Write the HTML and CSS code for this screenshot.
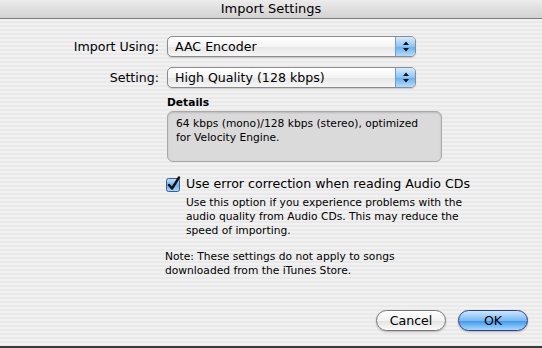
FILE: index.html
```html
<html lang="en">
	<head>
		<meta charset="UTF-8" />
		<title>Import Settings</title>
		<link rel="stylesheet" href="styles.css">
	</head>
	<body>
		<div class="window">
			<div class="titlebar">Import Settings</div>

			<div class="content">
				<div class="form">
					<label class="form-label">Import Using:</label>
					<div class="popup">
						<span class="popup-text">AAC Encoder</span>
						<span class="popup-arrows">
							<svg width="8" height="11" viewBox="0 0 8 11"><path d="M4 0.5 L7 4 L1 4 Z M1 7 L7 7 L4 10.5 Z" fill="#111"/></svg>
						</span>
					</div>

					<label class="form-label">Setting:</label>
					<div class="popup">
						<span class="popup-text">High Quality (128 kbps)</span>
						<span class="popup-arrows">
							<svg width="8" height="11" viewBox="0 0 8 11"><path d="M4 0.5 L7 4 L1 4 Z M1 7 L7 7 L4 10.5 Z" fill="#111"/></svg>
						</span>
					</div>
				</div>

				<div class="details">
					<div class="details-title">Details</div>
					<div class="details-box">64 kbps (mono)/128 kbps (stereo), optimized for Velocity Engine.</div>
				</div>

				<div class="option">
					<div class="check-row">
						<svg class="checkbox" width="15" height="16" viewBox="0 0 15 16">
							<defs>
								<linearGradient id="cb" x1="0" y1="0" x2="0" y2="1">
									<stop offset="0" stop-color="#c9e3fb"/>
									<stop offset="0.5" stop-color="#6fb0ee"/>
									<stop offset="1" stop-color="#a9d4fb"/>
								</linearGradient>
							</defs>
							<rect x="0.5" y="2.5" width="13" height="13" rx="2" fill="url(#cb)" stroke="#3d5f8c"/>
							<path d="M3 9 L6 12.5 L13 1.5" fill="none" stroke="#111" stroke-width="2.4" stroke-linecap="round" stroke-linejoin="round"/>
						</svg>
						<span class="check-label">Use error correction when reading Audio CDs</span>
					</div>
					<p class="option-help">Use this option if you experience problems with the audio quality from Audio CDs. This may reduce the speed of importing.</p>
				</div>

				<p class="note">Note: These settings do not apply to songs downloaded from the iTunes Store.</p>

				<div class="buttons">
					<div class="button">Cancel</div>
					<div class="button default">OK</div>
				</div>
			</div>
		</div>
	</body>
</html>
```

FILE: styles.css
```css
* {
	margin: 0;
	padding: 0;
	box-sizing: border-box;
}

body {
	width: 542px;
	height: 348px;
	overflow: hidden;
	font-family: "DejaVu Sans", sans-serif;
	font-size: 12.6px;
	color: #000;
}

.window {
	display: flex;
	flex-direction: column;
	height: 348px;
	border-bottom: 2px solid #3a3a3a;
}

.titlebar {
	height: 19px;
	line-height: 18px;
	text-align: center;
	font-size: 13px;
	background: linear-gradient(#ececec, #d2d2d2);
	border-bottom: 1px solid #7d7d7d;
}

.content {
	flex: 1;
	display: flex;
	flex-direction: column;
	padding: 17px 14px 0 0;
	background: repeating-linear-gradient(#f1f1f1 0 2px, #e9e9e9 2px 4px);
}

/* label / popup rows */
.form {
	display: grid;
	grid-template-columns: 159px 249px;
	column-gap: 8px;
	row-gap: 10px;
	align-items: center;
}

.form-label {
	text-align: right;
}

.popup {
	display: flex;
	height: 21px;
	border: 1px solid #8c8c8c;
	border-radius: 5px;
	background: linear-gradient(#ffffff, #f4f4f4 50%, #e6e6e6 51%, #f6f6f6);
	box-shadow: 0 1px 1px rgba(0, 0, 0, 0.15);
	overflow: hidden;
}

.popup-text {
	flex: 1;
	padding-left: 7px;
	line-height: 19px;
}

.popup-arrows {
	display: flex;
	align-items: center;
	justify-content: center;
	width: 20px;
	border-left: 1px solid #7a9bc4;
	background: linear-gradient(#d6ebfd, #8ec4f5 50%, #66aef0 51%, #b5dcfd);
}

.details {
	margin: 8px 0 0 167px;
	width: 275px;
}

.details-title {
	font-size: 10.7px;
	font-weight: bold;
	height: 15px;
}

.details-box {
	height: 51px;
	padding: 5px 8px;
	font-size: 10.7px;
	line-height: 14px;
	background: #dadada;
	border: 1px solid #a8a8a8;
	border-radius: 6px;
	box-shadow: inset 0 1px 2px rgba(0, 0, 0, 0.15);
}

.option {
	margin: 13px 0 0 166px;
}

.check-row {
	display: flex;
	align-items: center;
	gap: 5px;
	height: 17px;
}

.option-help {
	margin: 4px 0 0 20px;
	width: 300px;
	font-size: 10.7px;
	line-height: 14px;
}

.note {
	margin: 12px 0 0 165px;
	width: 250px;
	font-size: 10.7px;
	line-height: 14px;
}

.buttons {
	display: flex;
	justify-content: flex-end;
	gap: 12px;
	margin-top: auto;
	margin-bottom: 15px;
}

.button {
	width: 70px;
	height: 21px;
	line-height: 19px;
	text-align: center;
	border: 1px solid #777;
	border-radius: 11px;
	background: linear-gradient(#ffffff, #f2f2f2 50%, #e2e2e2 51%, #fbfbfb);
	box-shadow: 0 1px 2px rgba(0, 0, 0, 0.25);
}

.button.default {
	border-color: #2c3f8a;
	background: linear-gradient(#cde6fd, #7ab9f3 50%, #3d94ea 51%, #a7dafd);
}
```
